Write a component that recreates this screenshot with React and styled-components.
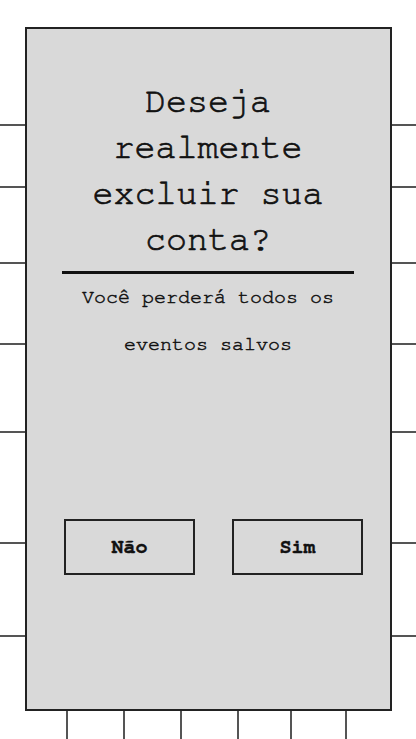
import styled, { createGlobalStyle } from "styled-components";

const mono = `"Nimbus Mono PS", "FreeMono", "Courier", "Courier New", "Liberation Mono", monospace`;

const GlobalStyle = createGlobalStyle`
  html, body {
    margin: 0;
    padding: 0;
    background: #ffffff;
  }
  body {
    font-family: ${mono};
    color: #111;
  }
`;

const Screen = styled.div`
  position: relative;
  width: 416px;
  height: 739px;
  overflow: hidden;
  background: #fff;
`;

const Row = styled.div`
  height: ${(p) => p.$h}px;
  box-sizing: border-box;
  border-bottom: 2px solid #555;
`;

const DayGrid = styled.div`
  display: flex;
  height: 102px;
`;

const DayCell = styled.div`
  width: ${(p) => p.$w}px;
  flex: ${(p) => (p.$w ? "none" : "1")};
  box-sizing: border-box;
  border-right: ${(p) => (p.$last ? "none" : "2px solid #555")};
`;

const Modal = styled.div`
  position: absolute;
  top: 27px;
  left: 25px;
  width: 367px;
  height: 684px;
  box-sizing: border-box;
  border: 2px solid #222;
  background: #d9d9d9;
  display: flex;
  flex-direction: column;
  padding-top: 50px;
`;

const Title = styled.h1`
  margin: 0 36px 0 35px;
  font-family: ${mono};
  font-size: 35px;
  line-height: 46px;
  font-weight: normal;
  text-align: center;
  color: #111;
  -webkit-text-stroke: 0.7px #111;
`;

const Divider = styled.hr`
  margin: 8px 36px 0 35px;
  border: none;
  height: 3px;
  background: #111;
`;

const Message = styled.p`
  margin: 0 36px 0 35px;
  font-family: ${mono};
  font-size: 20px;
  line-height: 47px;
  text-align: center;
  color: #111;
  -webkit-text-stroke: 0.5px #111;
`;

const Actions = styled.div`
  display: flex;
  gap: 37px;
  padding-left: 37px;
  margin-top: 151px;
`;

const Button = styled.button`
  width: 131px;
  height: 56px;
  box-sizing: border-box;
  border: 2px solid #222;
  background: transparent;
  font-family: ${mono};
  font-weight: bold;
  font-size: 20px;
  color: #111;
  cursor: pointer;
  padding: 0;
  -webkit-text-stroke: 0.4px #111;
`;

const rows = [126, 62, 76, 81, 88, 111, 93];
const cells = [68, 57, 57, 57, 53, 55];

export default function App() {
  return (
    <>
      <GlobalStyle />
      <Screen>
        {rows.map((h, i) => (
          <Row key={i} $h={h} />
        ))}
        <DayGrid>
          {cells.map((w, i) => (
            <DayCell key={i} $w={w} />
          ))}
          <DayCell $last />
        </DayGrid>

        <Modal>
          <Title>Deseja realmente excluir sua conta?</Title>
          <Divider />
          <Message>Você perderá todos os eventos salvos</Message>
          <Actions>
            <Button>Não</Button>
            <Button>Sim</Button>
          </Actions>
        </Modal>
      </Screen>
    </>
  );
}
